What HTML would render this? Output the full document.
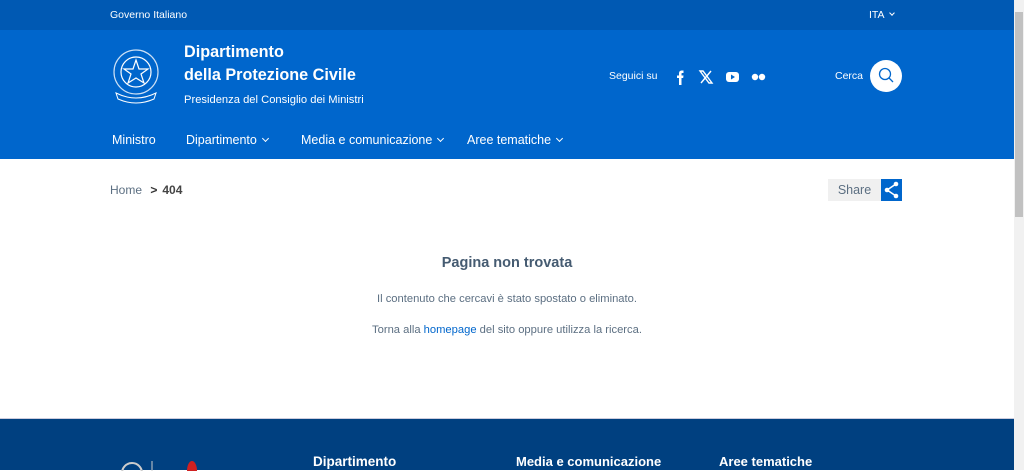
<!DOCTYPE html>
<html><head><meta charset="utf-8"><style>
*{margin:0;padding:0;box-sizing:border-box}
body{width:1024px;height:470px;overflow:hidden;font-family:"Liberation Sans",sans-serif;background:#fff;position:relative}
.top{position:absolute;left:0;top:0;width:1014px;height:30px;background:#0059b3;color:#fff;font-size:10.5px}
.hdr{position:absolute;left:0;top:30px;width:1014px;height:129px;background:#0066cc;color:#fff}
.sb{position:absolute;left:1014px;top:0;width:10px;height:470px;background:#f1f1f1}
.sb div{position:absolute;left:1px;top:12px;width:8px;height:205px;background:#c1c1c1}
.abs{position:absolute;white-space:nowrap}
.nav{font-size:12.5px}
.chev{display:inline-block;width:5px;height:5px;border-right:1px solid #fff;border-bottom:1px solid #fff;transform:rotate(45deg);margin-left:6px;position:relative;top:-3px}
.foot{position:absolute;left:0;top:418px;width:1014px;height:52px;background:#004080;border-top:1px solid #ccd}
.ft{font-weight:bold;color:#fff;position:absolute;top:35px;white-space:nowrap}
</style></head><body>
<div class="top"><span class="abs" style="left:110px;top:9px">Governo Italiano</span><span class="abs" style="left:869px;top:9px">ITA <span class="chev" style="width:4px;height:4px;margin-left:3px"></span></span></div>
<div class="hdr">
<svg class="abs" style="left:110px;top:15px" width="52" height="62" viewBox="0 0 52 62"><circle cx="26" cy="27" r="22" fill="none" stroke="#fff" stroke-width="1.2" opacity=".8"/><circle cx="26" cy="27" r="15" fill="none" stroke="#fff" stroke-width="1.2"/><polygon points="26,15 29,24 38,24 31,29 34,38 26,33 18,38 21,29 14,24 23,24" fill="none" stroke="#fff" stroke-width="1.2"/><path d="M6 48 Q26 58 46 48 L44 54 Q26 62 8 54Z" fill="none" stroke="#fff" stroke-width="1"/></svg>
<div class="abs" style="left:184px;top:11px;font-size:16.2px;font-weight:bold;line-height:23px">Dipartimento<br>della Protezione Civile</div>
<div class="abs" style="left:184px;top:64px;font-size:11.2px">Presidenza del Consiglio dei Ministri</div>
<div class="abs" style="left:609px;top:40px;font-size:10.5px">Seguici su</div>
<svg class="abs" style="left:672px;top:38px" width="100" height="18" viewBox="0 0 100 18" fill="#fff">
<path d="M7 17V10H5V7.5H7V5.5C7 3.5 8 2.5 10 2.5H11.5V5H10.3C9.7 5 9.5 5.3 9.5 5.9V7.5H11.5L11.2 10H9.5V17Z"/>
<path d="M28 3h3l9 12h-3z" fill="none" stroke="#fff" stroke-width="1.4"/><path d="M29 15l10-12" stroke="#fff" stroke-width="1.4"/>
<rect x="54" y="4" width="13" height="10" rx="3"/><path d="M59 6.5v5l4-2.5z" fill="#0066cc"/>
<circle cx="83" cy="9" r="3.2"/><circle cx="90" cy="9" r="3.2"/></svg>
<div class="abs" style="left:835px;top:40px;font-size:10.5px">Cerca</div>
<div class="abs" style="left:870px;top:30px;width:32px;height:32px;border-radius:50%;background:#fff"><svg width="32" height="32"><circle cx="15" cy="14" r="5.5" fill="none" stroke="#0066cc" stroke-width="1.3"/><path d="M19 18l4 4" stroke="#0066cc" stroke-width="1.3"/></svg></div>
<div class="abs nav" style="left:112px;top:103px">Ministro</div>
<div class="abs nav" style="left:186px;top:103px">Dipartimento<span class="chev"></span></div>
<div class="abs nav" style="left:301px;top:103px">Media e comunicazione<span class="chev"></span></div>
<div class="abs nav" style="left:467px;top:103px">Aree tematiche<span class="chev"></span></div>
</div>
<div class="sb"><div></div></div>
<div class="abs" style="left:110px;top:183px;font-size:12px;color:#5c6f82">Home <b style="color:#333;margin:0 5px">&gt;</b><b style="color:#444">404</b></div>
<div class="abs" style="left:828px;top:179px;width:53px;height:22px;background:#f0f0f0;color:#5c6f82;font-size:12.5px;text-align:center;line-height:22px">Share</div>
<div class="abs" style="left:881px;top:179px;width:21px;height:22px;background:#0066cc"><svg width="21" height="22"><path d="M15 5L6 11L15 17" stroke="#fff" stroke-width="1.5" fill="none"/><circle cx="15" cy="5" r="2.3" fill="#fff"/><circle cx="6" cy="11" r="2.3" fill="#fff"/><circle cx="15" cy="17" r="2.3" fill="#fff"/></svg></div>
<div class="abs" style="left:0;width:1014px;top:255px;text-align:center;font-size:14.5px;font-weight:bold;color:#455b71">Pagina non trovata</div>
<div class="abs" style="left:0;width:1014px;top:293px;text-align:center;font-size:11.2px;color:#5c6f82">Il contenuto che cercavi è stato spostato o eliminato.</div>
<div class="abs" style="left:0;width:1014px;top:324px;text-align:center;font-size:11.2px;color:#5c6f82">Torna alla <span style="color:#0066cc">homepage</span> del sito oppure utilizza la ricerca.</div>
<div class="foot">
<svg class="abs" style="left:110px;top:38px" width="100" height="14"><circle cx="22" cy="16" r="10" fill="none" stroke="#ccc" stroke-width="2"/><line x1="42" y1="4" x2="42" y2="14" stroke="#ccc"/><ellipse cx="82" cy="14" rx="5" ry="10" fill="#d02020"/></svg>
<div class="ft" style="left:313px;font-size:13.5px">Dipartimento</div>
<div class="ft" style="left:516px;font-size:13px">Media e comunicazione</div>
<div class="ft" style="left:719px;font-size:13px">Aree tematiche</div>
</div>
</body></html>
